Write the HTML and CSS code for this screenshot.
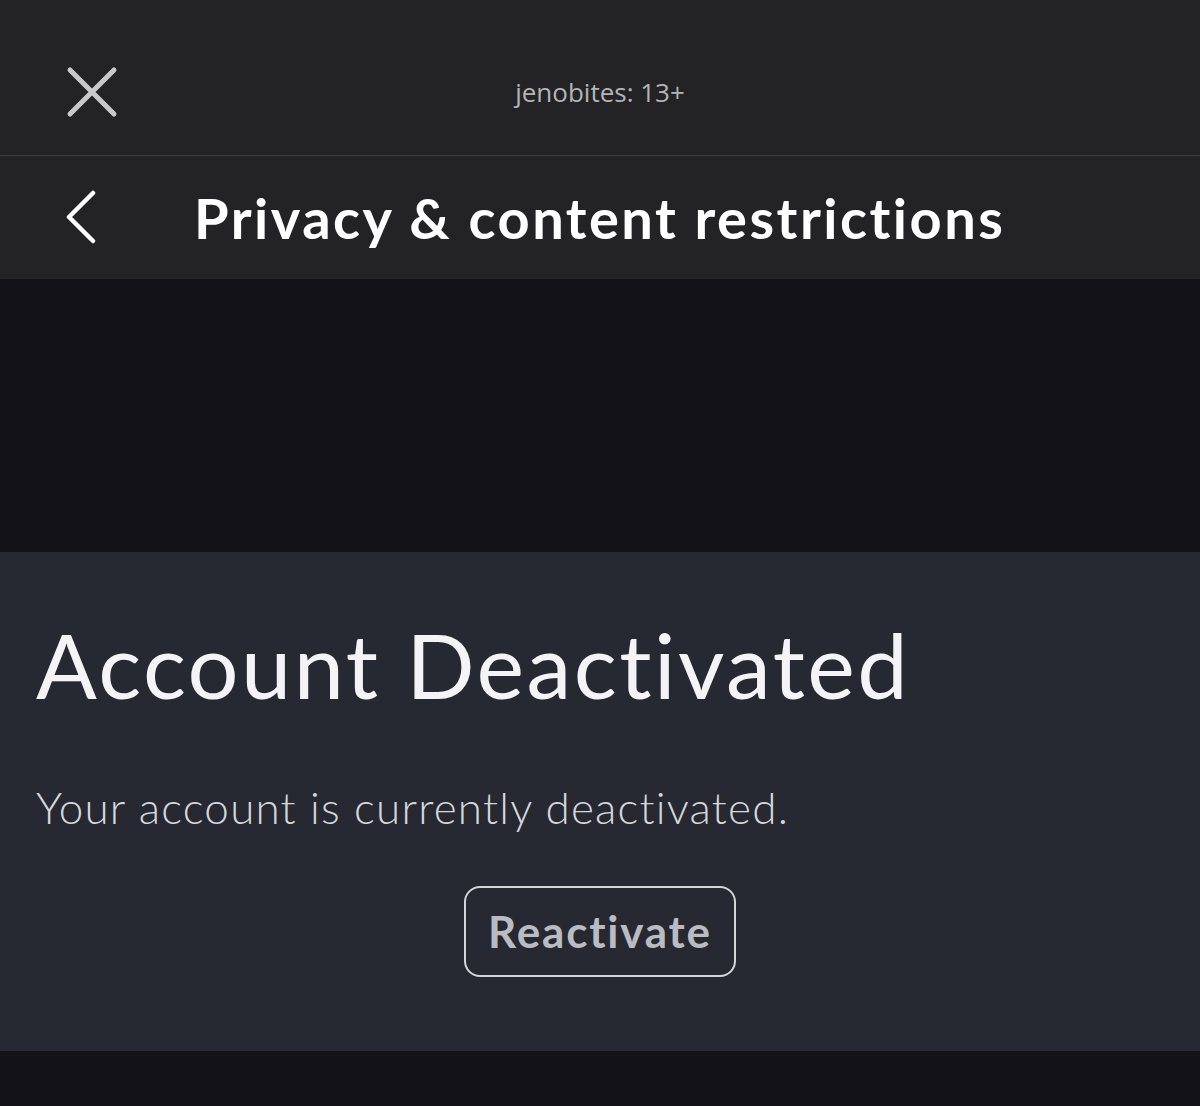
FILE: index.html
```html
<!DOCTYPE html>
<html>
<head>
<meta charset="utf-8">
<link rel="stylesheet" href="styles.css">
</head>
<body>
<div class="page">
  <header class="topbar">
    <button class="close" aria-label="Close">
      <svg width="52" height="52" viewBox="0 0 52 52"><path d="M4 4 L48 48 M48 4 L4 48" stroke="#c9c9cb" stroke-width="5" stroke-linecap="round" fill="none"/></svg>
    </button>
    <div class="account">jenobites: 13+</div>
  </header>
  <div class="navbar">
    <button class="back" aria-label="Back">
      <svg width="34" height="54" viewBox="0 0 34 54"><path d="M29 3 L5 27 L29 51" stroke="#ffffff" stroke-width="4.5" stroke-linecap="round" stroke-linejoin="round" fill="none"/></svg>
    </button>
    <h1 class="nav-title">Privacy &amp; content restrictions</h1>
  </div>
  <div class="spacer"></div>
  <section class="panel">
    <h2 class="panel-title">Account Deactivated</h2>
    <p class="panel-text">Your account is currently deactivated.</p>
    <div class="actions"><button class="reactivate">Reactivate</button></div>
  </section>
  <div class="footer-space"></div>
</div>
</body>
</html>
```
FILE: styles.css
```css
* { box-sizing: border-box; }
html, body { margin: 0; padding: 0; background: #131317; }
body { font-family: Lato, "Open Sans", sans-serif; width: 1200px; height: 1106px; overflow: hidden; font-variant-ligatures: none; }
.page { display: flex; flex-direction: column; }
.topbar {
  height: 156px;
  background: #232325;
  border-bottom: 1px solid #3a3a3d;
  position: relative;
  display: flex;
  align-items: center;
  justify-content: center;
}
.close {
  position: absolute;
  left: 66px;
  top: 66px;
  background: none; border: 0; padding: 0; width: 52px; height: 52px;
  display: flex;
}
.account {
  font-family: "Open Sans", sans-serif;
  font-size: 26px;
  color: #b4b4b6;
  margin-top: 28px;
}
.navbar {
  height: 123px;
  background: #232325;
  display: flex;
  align-items: center;
  padding-left: 64px;
}
.back { background: none; border: 0; padding: 0; display: flex; width: 34px; height: 54px; margin-top: -2px; }
.nav-title {
  margin: 0 0 0 96px;
  font-family: Lato, sans-serif;
  font-weight: 700;
  font-size: 56px;
  color: #ffffff;
  letter-spacing: 2.5px;
  font-variant-ligatures: none;
}
.spacer { height: 273px; background: #131317; }
.panel {
  height: 499px;
  background: #262931;
  padding: 0 36px;
  display: flex;
  flex-direction: column;
}
.panel-title {
  margin: 58px 0 0;
  font-weight: 400;
  font-size: 90px;
  line-height: 1.2;
  color: #f4f4f6;
  letter-spacing: 2.5px;
}
.panel-text {
  margin: 63px 0 0;
  font-weight: 300;
  font-size: 44px;
  line-height: 1.2;
  color: #d6d7da;
  letter-spacing: 1.2px;
}
.actions { display: flex; justify-content: center; margin-top: 52px; }
.reactivate {
  width: 272px;
  height: 91px;
  border: 2.5px solid #d4d5d9;
  border-radius: 16px;
  background: transparent;
  color: #babcc2;
  font-family: Lato, sans-serif;
  font-weight: 700;
  font-size: 44px;
  letter-spacing: 1.8px;
  padding: 0;
  font-variant-ligatures: none;
}
.footer-space { height: 56px; background: #131317; }
```
